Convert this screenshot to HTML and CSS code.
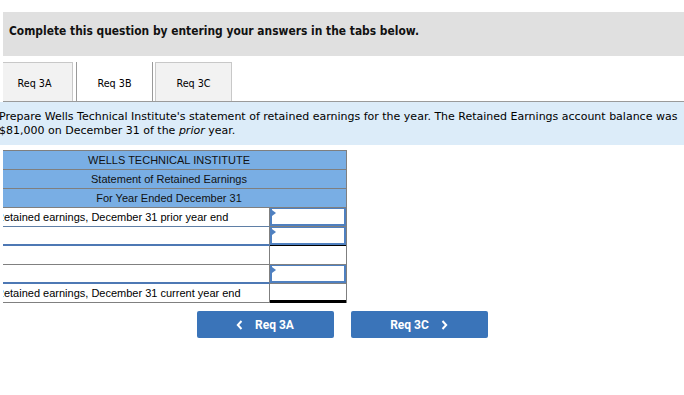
FILE: index.html
```html
<!DOCTYPE html>
<html lang="en">
  <head>
    <meta charset="UTF-8" />
    <meta name="viewport" content="width=device-width, initial-scale=1.0" />
    <title>Req 3B</title>
    <link rel="stylesheet" href="styles.css">
  </head>
  <body>
    <div class="banner">Complete this question by entering your answers in the tabs below.</div>

    <div class="tabs">
      <div class="tab-row">
        <div class="tab">Req 3A</div>
        <div class="tab active">Req 3B</div>
        <div class="tab">Req 3C</div>
      </div>
    </div>

    <div class="info">
      <p>
        Prepare Wells Technical Institute's statement of retained earnings for the year. The Retained Earnings account balance was
        $81,000 on December 31 of the <em>prior</em> year.
      </p>
    </div>

    <div class="sheet">
      <div class="statement">
        <div class="head">WELLS TECHNICAL INSTITUTE</div>
        <div class="head">Statement of Retained Earnings</div>
        <div class="head">For Year Ended December 31</div>

        <div class="line mixed">
          <div class="label">Retained earnings, December 31 prior year end</div>
          <div class="amount"><div class="entry"></div></div>
        </div>
        <div class="line pick">
          <div class="label"></div>
          <div class="amount underline"><div class="entry"></div></div>
        </div>
        <div class="line">
          <div class="label"></div>
          <div class="amount"></div>
        </div>
        <div class="line pick">
          <div class="label"></div>
          <div class="amount"><div class="entry"></div></div>
        </div>
        <div class="line">
          <div class="label">Retained earnings, December 31 current year end</div>
          <div class="amount total"></div>
        </div>
      </div>
    </div>

    <div class="nav">
      <button class="nav-btn">
        <svg width="7" height="10" viewBox="0 0 7 10"><path d="M5.5 1 L1.8 5 L5.5 9" fill="none" stroke="#fff" stroke-width="2"/></svg>
        <span>Req 3A</span>
      </button>
      <button class="nav-btn">
        <span>Req 3C</span>
        <svg width="7" height="10" viewBox="0 0 7 10"><path d="M1.5 1 L5.2 5 L1.5 9" fill="none" stroke="#fff" stroke-width="2"/></svg>
      </button>
    </div>
  </body>
</html>
```

FILE: styles.css
```css
body {
  margin: 0;
  font-family: "DejaVu Sans Condensed", "DejaVu Sans", sans-serif;
  color: #000;
  background-color: #fff;
}

.banner {
  margin: 12px 0 0 3px;
  height: 44px;
  line-height: 38px;
  padding-left: 6px;
  background-color: #e0e0e0;
  font-size: 11.9px;
  font-weight: bold;
  color: #111;
}

.tabs {
  margin: 6px 0 0 3px;
  overflow: hidden;
  border-bottom: 1px solid #9a9a9a;
}

.tab-row {
  display: flex;
  margin-left: -7px;
  gap: 1px;
}

.tab {
  width: 77px;
  height: 39px;
  line-height: 41px;
  text-align: center;
  font-size: 10.7px;
  background-color: #f2f2f2;
  border: 1px solid #c8c8c8;
  border-bottom: none;
  box-sizing: border-box;
}

.tab.active {
  background-color: #fff;
  border-color: #9a9a9a;
  margin: 0 1px 0 2px;
  height: 40px;
  margin-top: -1px;
  line-height: 43px;
}

.info {
  background-color: #dcecf9;
  height: 43px;
  overflow: hidden;
}

.info p {
  margin: 0 0 0 -1px;
  padding-top: 8px;
  font-family: "DejaVu Sans", sans-serif;
  font-size: 11px;
  line-height: 14px;
}

.sheet {
  margin: 5px 0 0 3px;
  width: 344px;
  overflow: hidden;
  font-family: "Liberation Sans", Arial, sans-serif;
  font-size: 11px;
}

.statement {
  margin-left: -11px;
  border-top: 1px solid #7f7f7f;
  border-right: 1px solid #7f7f7f;
}

.head {
  height: 18px;
  line-height: 19px;
  text-align: center;
  background-color: #79aee4;
  border-bottom: 1px solid #7f7f7f;
  color: #111;
}

.line {
  display: grid;
  grid-template-columns: 1fr 76px;
  height: 19px;
}

.label {
  padding-left: 4px;
  line-height: 18px;
  white-space: nowrap;
  overflow: hidden;
  border-right: 1px solid #7f7f7f;
  border-bottom: 1px solid #808080;
}

.line.mixed .label {
  border-bottom-color: #5f7fa6;
}

.line.pick .label {
  border-bottom: 2px solid #4d78b4;
  height: 17px;
}

.amount {
  border-bottom: 1px solid #808080;
}

.amount.underline {
  border-bottom: 1px solid #000;
}

.amount.total {
  border-bottom: 3px solid #000;
}

.entry {
  position: relative;
  height: 100%;
  box-sizing: border-box;
  border: 2px solid #4f80c0;
  border-top-width: 1px;
  background-color: #fff;
}

.entry::before {
  content: "";
  position: absolute;
  left: 0;
  top: 1px;
  border-left: 4px solid #4f80c0;
  border-top: 3px solid transparent;
  border-bottom: 3px solid transparent;
}

.nav {
  display: flex;
  justify-content: center;
  gap: 17px;
  margin-top: 8px;
}

.nav-btn {
  display: flex;
  align-items: center;
  justify-content: center;
  gap: 12px;
  width: 137px;
  height: 27px;
  padding: 0;
  border: none;
  border-radius: 2px;
  background-color: #3a74b9;
  color: #fff;
  font-family: Roboto, "Liberation Sans", sans-serif;
  font-size: 12px;
  font-weight: bold;
  cursor: pointer;
}
```
